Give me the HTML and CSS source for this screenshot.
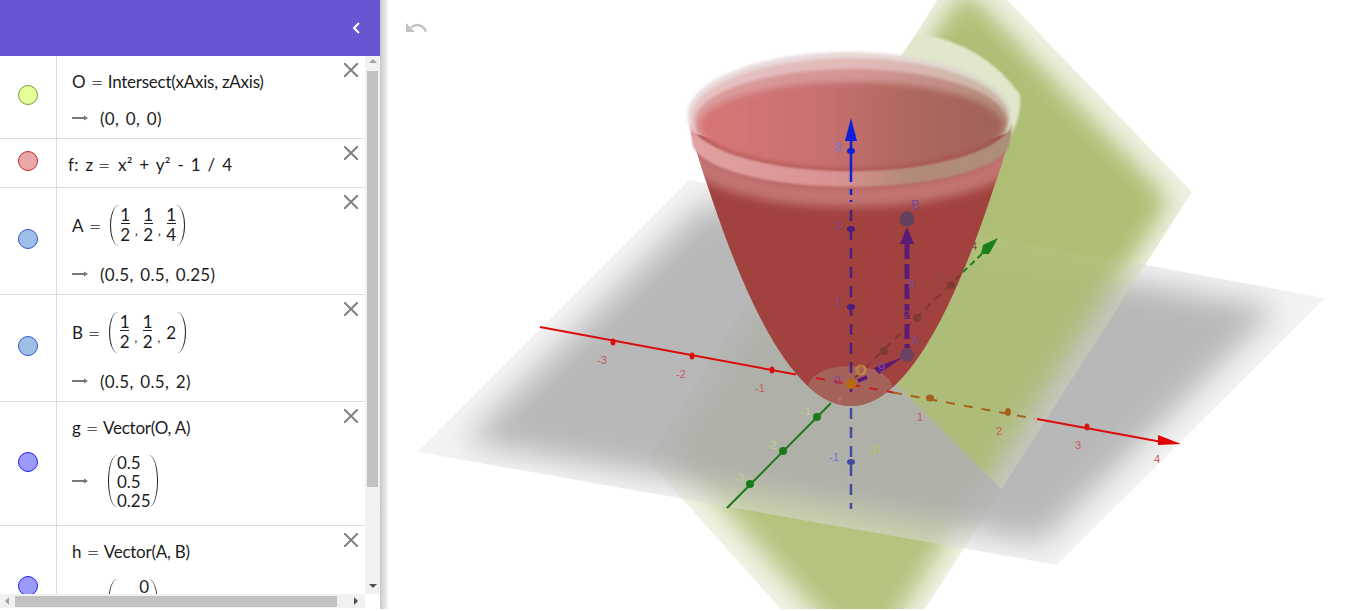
FILE: index.html
```html
<!DOCTYPE html>
<html lang="en">
<head>
<meta charset="utf-8">
<title>GeoGebra 3D</title>
<link rel="stylesheet" href="styles.css">
</head>
<body>
<div class="app">
  <aside class="panel">
    <header class="panel-head">
      <svg class="chevron" width="10" height="14" viewBox="0 0 10 14"><path d="M8 2 3 7l5 5" fill="none" stroke="#fff" stroke-width="2"/></svg>
    </header>
    <div class="panel-body">
      <div class="list">
        <div class="row row-point">
          <div class="marble-cell"><span class="marble marble-lime"></span></div>
          <div class="content">
            <div class="input"><span>O</span><span class="eq">=</span><span class="tight">Intersect(xAxis, zAxis)</span></div>
            <div class="output"><svg class="arrow" width="16" height="6" viewBox="0 0 16 6"><path d="M0 3h13" stroke="#777" stroke-width="2"/><path d="M12 .5 16 3l-4 2.500z" fill="#777"/></svg><span class="value">(0, 0, 0)</span></div>
          </div>
          <svg class="close" width="14" height="14" viewBox="0 0 14 14"><path d="M0 0 14 14M14 0 0 14" stroke="#808080" stroke-width="2"/></svg>
        </div>
        <div class="row row-surface">
          <div class="marble-cell"><span class="marble marble-red"></span></div>
          <div class="content content-surface">
            <div class="input value"><span>f: z</span><span class="eq">=</span><span class="terms">x² + y² - 1 / 4</span></div>
          </div>
          <svg class="close" width="14" height="14" viewBox="0 0 14 14"><path d="M0 0 14 14M14 0 0 14" stroke="#808080" stroke-width="2"/></svg>
        </div>
        <div class="row row-frac">
          <div class="marble-cell"><span class="marble marble-blue"></span></div>
          <div class="content content-frac">
            <div class="input"><span>A</span><span class="eq">=</span>
              <span class="paren paren-l"></span>
              <span class="frac"><span>1</span><span class="den">2</span></span><span class="comma">,</span>
              <span class="frac"><span>1</span><span class="den">2</span></span><span class="comma">,</span>
              <span class="frac"><span>1</span><span class="den">4</span></span>
              <span class="paren paren-r"></span>
            </div>
            <div class="output"><svg class="arrow" width="16" height="6" viewBox="0 0 16 6"><path d="M0 3h13" stroke="#777" stroke-width="2"/><path d="M12 .5 16 3l-4 2.500z" fill="#777"/></svg><span class="value">(0.5, 0.5, 0.25)</span></div>
          </div>
          <svg class="close" width="14" height="14" viewBox="0 0 14 14"><path d="M0 0 14 14M14 0 0 14" stroke="#808080" stroke-width="2"/></svg>
        </div>
        <div class="row row-frac">
          <div class="marble-cell"><span class="marble marble-blue"></span></div>
          <div class="content content-frac">
            <div class="input"><span>B</span><span class="eq">=</span>
              <span class="paren paren-l"></span>
              <span class="frac"><span>1</span><span class="den">2</span></span><span class="comma">,</span>
              <span class="frac"><span>1</span><span class="den">2</span></span><span class="comma">,</span>
              <span class="whole">2</span>
              <span class="paren paren-r"></span>
            </div>
            <div class="output"><svg class="arrow" width="16" height="6" viewBox="0 0 16 6"><path d="M0 3h13" stroke="#777" stroke-width="2"/><path d="M12 .5 16 3l-4 2.500z" fill="#777"/></svg><span class="value">(0.5, 0.5, 2)</span></div>
          </div>
          <svg class="close" width="14" height="14" viewBox="0 0 14 14"><path d="M0 0 14 14M14 0 0 14" stroke="#808080" stroke-width="2"/></svg>
        </div>
        <div class="row row-matrix">
          <div class="marble-cell"><span class="marble marble-violet"></span></div>
          <div class="content content-matrix">
            <div class="input"><span>g</span><span class="eq">=</span><span class="tight">Vector(O, A)</span></div>
            <div class="output output-matrix"><svg class="arrow" width="16" height="6" viewBox="0 0 16 6"><path d="M0 3h13" stroke="#777" stroke-width="2"/><path d="M12 .5 16 3l-4 2.500z" fill="#777"/></svg>
              <span class="paren paren-tall paren-l"></span>
              <span class="matrix"><span>0.5</span><span>0.5</span><span>0.25</span></span>
              <span class="paren paren-tall paren-r"></span>
            </div>
          </div>
          <svg class="close" width="14" height="14" viewBox="0 0 14 14"><path d="M0 0 14 14M14 0 0 14" stroke="#808080" stroke-width="2"/></svg>
        </div>
        <div class="row row-matrix">
          <div class="marble-cell"><span class="marble marble-violet"></span></div>
          <div class="content content-matrix">
            <div class="input"><span>h</span><span class="eq">=</span><span class="tight">Vector(A, B)</span></div>
            <div class="output output-matrix"><svg class="arrow" width="16" height="6" viewBox="0 0 16 6"><path d="M0 3h13" stroke="#777" stroke-width="2"/><path d="M12 .5 16 3l-4 2.500z" fill="#777"/></svg>
              <span class="paren paren-tall paren-l"></span>
              <span class="matrix matrix-right"><span>0</span><span>0</span><span>1.75</span></span>
              <span class="paren paren-tall paren-r"></span>
            </div>
          </div>
          <svg class="close" width="14" height="14" viewBox="0 0 14 14"><path d="M0 0 14 14M14 0 0 14" stroke="#808080" stroke-width="2"/></svg>
        </div>
      </div>
      <div class="vscroll">
        <span class="tri tri-up"></span>
        <span class="vthumb"></span>
        <span class="tri tri-down"></span>
      </div>
      <div class="hscroll">
        <span class="tri tri-left"></span>
        <span class="hthumb"></span>
        <span class="tri tri-right"></span>
      </div>
    </div>
  </aside>
  <div class="splitter"></div>
  <main class="view">
    <svg class="scene" width="978" height="609" viewBox="388 0 978 609">
      <defs>
        <filter id="blur-plane" filterUnits="userSpaceOnUse" x="300" y="-200" width="1150" height="1000"><feGaussianBlur stdDeviation="15"/></filter>
        <filter id="blur-green" filterUnits="userSpaceOnUse" x="300" y="-200" width="1150" height="1000"><feGaussianBlur stdDeviation="12"/></filter>
        <filter id="blur-s" filterUnits="userSpaceOnUse" x="600" y="0" width="500" height="300"><feGaussianBlur stdDeviation="1.500"/></filter>
        <filter id="blur-m" filterUnits="userSpaceOnUse" x="600" y="0" width="500" height="300"><feGaussianBlur stdDeviation="5"/></filter>
        <filter id="blur-t" filterUnits="userSpaceOnUse" x="600" y="0" width="500" height="300"><feGaussianBlur stdDeviation=".8"/></filter>
        <filter id="blur-i" filterUnits="userSpaceOnUse" x="600" y="0" width="500" height="300"><feGaussianBlur stdDeviation="3"/></filter>
        <clipPath id="clip-green"><polygon points="965,-44 1192,192 865,703 647,460"/></clipPath>
        <clipPath id="clip-gray"><polygon points="689,180 1325,298 1057,565 417,452"/></clipPath>
        <clipPath id="clip-front"><polygon points="760,248 760,-100 1300,-100 1300,788"/></clipPath>
        <clipPath id="clip-body"><path d="M689,126 Q851,686 1013,126Z"/></clipPath>
        <linearGradient id="grad-interior" gradientUnits="userSpaceOnUse" x1="698" y1="0" x2="1004" y2="0">
          <stop offset="0" stop-color="#d87676"/><stop offset=".4" stop-color="#c87072"/><stop offset=".7" stop-color="#ae675d"/><stop offset="1" stop-color="#a0625a"/>
        </linearGradient>
        <linearGradient id="grad-band" gradientUnits="userSpaceOnUse" x1="690" y1="0" x2="1010" y2="0">
          <stop offset="0" stop-color="#e2a2a2"/><stop offset=".45" stop-color="#da9292"/><stop offset=".68" stop-color="#b48a78"/><stop offset="1" stop-color="#ad8f7a"/>
        </linearGradient>
        <linearGradient id="grad-rim1" gradientUnits="userSpaceOnUse" x1="690" y1="0" x2="1010" y2="0">
          <stop offset="0" stop-color="#e8dede"/><stop offset=".55" stop-color="#e8d8d8"/><stop offset="1" stop-color="#d8dac8"/>
        </linearGradient>
        <linearGradient id="grad-rim2" gradientUnits="userSpaceOnUse" x1="690" y1="0" x2="1010" y2="0">
          <stop offset="0" stop-color="#e6c2c2"/><stop offset=".55" stop-color="#e2b8b8"/><stop offset="1" stop-color="#c8b6a4"/>
        </linearGradient>
        <linearGradient id="grad-rim3" gradientUnits="userSpaceOnUse" x1="690" y1="0" x2="1010" y2="0">
          <stop offset="0" stop-color="#dc9c9c"/><stop offset=".55" stop-color="#d49494"/><stop offset="1" stop-color="#b08a78"/>
        </linearGradient>
      </defs>

      <g clip-path="url(#clip-green)">
        <polygon points="965,-44 1192,192 865,703 647,460" fill="#e6ebd4" fill-opacity=".6"/>
        <polygon points="965,-6 1165,201 866,668 672,452" fill="#aabb6e" fill-opacity=".85" filter="url(#blur-green)"/>
      </g>
      <g clip-path="url(#clip-gray)">
        <polygon points="689,180 1325,298 1057,565 417,452" fill="#e4e4e4" fill-opacity=".45"/>
        <polygon points="705,202 1277,308 1041,543 465,442" fill="#a9a9a9" fill-opacity=".79" filter="url(#blur-plane)"/>
      </g>
      <g clip-path="url(#clip-front)">
        <g clip-path="url(#clip-green)">
          <polygon points="965,-44 1192,192 865,703 647,460" fill="#e6ebd4" fill-opacity=".3"/>
          <polygon points="965,-6 1165,201 866,668 672,452" fill="#aabb6e" fill-opacity=".85" filter="url(#blur-green)"/>
        </g>
      </g>

      <path class="rim-green" d="M917,33Q985,44 1020,95Q1022,118 1009,138L990,100 898,60Z" filter="url(#blur-t)"/>
      <ellipse cx="849" cy="115" rx="162" ry="63" fill="url(#grad-rim1)" filter="url(#blur-s)"/>
      <ellipse cx="850" cy="118" rx="159" ry="60" fill="url(#grad-rim2)" filter="url(#blur-s)"/>
      <ellipse cx="851" cy="122" rx="156" ry="53" fill="url(#grad-rim3)" filter="url(#blur-s)"/>

      <path d="M691,132 Q851,680 1011,132 Q851,190 691,132Z" fill="#a1423f"/>
      <g clip-path="url(#clip-body)">
        <path d="M688,146A163,50 0 0 0 1014,146" fill="none" stroke="#c27472" stroke-width="22" filter="url(#blur-m)"/>
      </g>
      <ellipse cx="851" cy="126" rx="152" ry="44" fill="url(#grad-interior)" filter="url(#blur-i)"/>
      <path d="M689,118A162,53 0 0 0 1013,118L1010,141A159,46 0 0 1 692,141Z" fill="url(#grad-band)" filter="url(#blur-t)"/>
      <ellipse cx="850" cy="387" rx="42" ry="21" fill="#a5625a" clip-path="url(#clip-body)"/>

      <path class="axis-red" d="M540,327 796,374.500"/>
      <path class="axis-red-dash" d="M816,378 893,392.500"/>
      <path class="axis-brown" d="M893,392.500 1035,418.800"/>
      <path class="axis-red" d="M1037,419 1162,442"/>
      <polygon points="1181,444 1158,435 1158,445" fill="#e00000"/>
      <g fill="#d81010">
        <ellipse cx="613" cy="342" rx="2.500" ry="3.500"/><ellipse cx="692" cy="356" rx="2.500" ry="3.500"/><ellipse cx="772" cy="370" rx="2.500" ry="3.500"/>
        <ellipse cx="1087" cy="427" rx="2.500" ry="3.500"/>
      </g>
      <g fill="#a5601c"><ellipse cx="930" cy="398" rx="4" ry="3.500"/><ellipse cx="1008" cy="412" rx="3" ry="4"/></g>

      <path class="axis-green" d="M727,508 831,403"/>
      <path class="axis-brown-thin" d="M855,378 960,275"/>
      <path class="axis-green-dash" d="M963,272 984,252"/>
      <polygon points="998,238 983,245 981,254 989,254" fill="#188018"/>
      <g fill="#1a7a1a"><circle cx="750" cy="484" r="4"/><circle cx="783" cy="451" r="4"/><circle cx="817" cy="417" r="4"/></g>
      <g fill="#7d3a30"><circle cx="884" cy="351" r="4"/><circle cx="917" cy="318" r="4"/><circle cx="951" cy="285" r="4"/></g>

      <path class="axis-blue-top" d="M851,138V182"/>
      <path class="axis-blue-top axis-blue-dash" d="M851,189V202"/>
      <polygon points="851,118 845,141 857,141" fill="#1020d8"/>
      <path class="axis-purple" d="M851,210V398"/>
      <path class="axis-slate" d="M851,408V509"/>
      <g fill="#4a1f80"><ellipse cx="851" cy="229" rx="4" ry="3"/><ellipse cx="851" cy="307" rx="4" ry="3"/></g>
      <ellipse cx="851" cy="151" rx="4" ry="3" fill="#1020d8"/>
      <ellipse cx="851" cy="462" rx="4" ry="3" fill="#454aa0"/>

      <path class="vector-h" d="M907,244V348"/>
      <polygon points="907,227 900,244 914,244" fill="#5a1a78"/>
      <path class="vector-g" d="M858,381 867,377"/>
      <polygon points="903,357 874,368 879,374" fill="#5a1a78"/>
      <circle cx="907" cy="355" r="7" fill="#6b4263"/>
      <circle cx="907" cy="219" r="7.500" fill="#64405f"/>
      <circle cx="851" cy="384" r="5" fill="#b8680f"/>
      <circle cx="861" cy="370" r="5" fill="none" stroke="#c88a40" stroke-width="1.200"/>

      <g class="labels">
        <text class="lbl-red" x="597" y="364">-3</text><text class="lbl-red" x="676" y="378">-2</text><text class="lbl-red" x="755" y="392">-1</text>
        <text class="lbl-red" x="917" y="421">1</text><text class="lbl-red" x="996" y="435">2</text><text class="lbl-red" x="1075" y="449">3</text><text class="lbl-red" x="1154" y="463">4</text>
        <text class="lbl-lime" x="734" y="482">-3</text><text class="lbl-lime" x="767" y="449">-2</text><text class="lbl-lime" x="801" y="415">-1</text>
        <text class="lbl-dark" x="871" y="348">1</text><text class="lbl-dark" x="904" y="318">2</text><text class="lbl-dark" x="938" y="282">3</text><text class="lbl-dark" x="971" y="250">4</text>
        <text class="lbl-blue" x="835" y="151">3</text><text class="lbl-purple" x="835" y="230">2</text><text class="lbl-purple" x="835" y="306">1</text><text class="lbl-blue" x="829" y="461">-1</text>
        <text class="lbl-purple" x="834" y="384">0</text><text class="lbl-purple lbl-big" x="911" y="209">B</text><text class="lbl-purple lbl-big" x="911" y="345">A</text>
        <text class="lbl-purple lbl-big" x="908" y="288">h</text><text class="lbl-purple lbl-big" x="878" y="369">g</text><text class="lbl-orange" x="857" y="374">O</text>
        <text class="lbl-pink" x="838" y="405">f</text><text class="lbl-p" x="872" y="453">p</text>
      </g>

      <g class="undo">
        <path d="M411,27.500C417,23 423,25 426,31.500" fill="none" stroke="#c2c2c2" stroke-width="2.500"/>
        <polygon points="406,23 406,32 415,32" fill="#c2c2c2"/>
      </g>
    </svg>
  </main>
</div>
</body>
</html>
```
FILE: styles.css
```css
* { box-sizing: border-box; }
html, body { margin: 0; height: 100%; background: #fff; overflow: hidden; }
body { font-family: Lato, "Open Sans", sans-serif; color: #1c1c1c; }

.app { display: flex; height: 609px; }

.panel { width: 380px; flex: none; display: flex; flex-direction: column; }
.panel-head { height: 56px; flex: none; background: #6557d2; display: flex; justify-content: flex-end; align-items: center; padding: 0 19px 0 0; }
.chevron { display: block; }

.panel-body { flex: 1; min-height: 0; display: grid; grid-template-columns: 365px 15px; grid-template-rows: 538px 14px; }

.list { overflow: hidden; background: #fff; font-size: 17px; }
.row { position: relative; display: flex; border-bottom: 1px solid #dcdcdc; overflow: hidden; }
.row-point { height: 83px; }
.row-surface { height: 49px; }
.row-frac { height: 107px; }
.row-matrix { height: 124px; }

.marble-cell { width: 57px; flex: none; border-right: 1px solid #dcdcdc; display: flex; align-items: center; justify-content: center; padding: 0 1px 4px 0; }
.marble { width: 20px; height: 20px; border-radius: 50%; border: 1px solid #000; display: block; }
.marble-lime { background: #e5ff99; border-color: #7c9c3c; }
.marble-red { background: #e8a8a8; border-color: #c8282c; }
.marble-blue { background: #9dbfe8; border-color: #3557cf; }
.marble-violet { background: #9b9bff; border-color: #2020ee; }

.content { flex: 1; padding: 7px 0 0 15px; min-width: 0; }
.content-surface { padding: 7px 0 0 11px; }
.content-frac { padding-top: 15px; }
.content-matrix { padding-top: 7px; }

.input { height: 36px; display: flex; align-items: center; white-space: pre; }
.content-frac .input { height: 44px; white-space: normal; }
.eq { color: #555; font-size: 21px; font-weight: 300; line-height: 1; margin: 0 5px; transform: scaleX(1.05); }
.tight { letter-spacing: -.25px; }
.terms { word-spacing: 2px; margin-left: 2px; }
.output { height: 36px; margin-top: 1px; display: flex; align-items: center; white-space: pre; }
.content-frac .output { margin-top: 9px; }
.output-matrix { height: 60px; margin-top: 6px; }
.arrow { flex: none; display: block; margin-right: 12px; }
.value { word-spacing: 2px; letter-spacing: .3px; }

.frac { display: inline-flex; flex-direction: column; align-items: center; width: 9px; font-size: 17px; line-height: 17px; flex: none; }
.den { border-top: 1px solid #222; align-self: stretch; line-height: 19px; display: flex; justify-content: center; padding-top: 1px; }
.comma { font-size: 14px; align-self: center; margin: 8px 9px 0 5px; color: #333; width: 0; }
.whole { font-size: 17px; margin: 0 1px 0 0; }

.paren { display: block; flex: none; width: 9px; height: 41px; border: 0 solid #222; }
.paren-l { border-left-width: 1.5px; border-radius: 100% 0 0 100% / 50% 0 0 50%; margin: 0 2px 0 4px; }
.paren-r { border-right-width: 1.5px; border-radius: 0 100% 100% 0 / 0 50% 50% 0; margin: 0; }
.paren-tall { height: 52px; width: 9px; }
.output-matrix .paren-l { margin: 0 0 0 8px; }
.output-matrix .paren-r { margin: 0; }

.matrix { display: flex; flex-direction: column; font-size: 17px; line-height: 19px; width: 32px; flex: none; }
.matrix-right { align-items: flex-end; }

.close { position: absolute; right: 7px; top: 7px; display: block; }

.vscroll { background: #f1f1f1; display: flex; flex-direction: column; align-items: center; padding: 0 2px; grid-row: 1; grid-column: 2; }
.vthumb { width: 11px; height: 416px; background: #c1c1c1; flex: none; margin: 6px 0 0; }
.hscroll { background: #f1f1f1; display: flex; align-items: center; grid-row: 2; grid-column: 1; padding: 0 3px 0 5px; }
.hthumb { width: 322px; height: 11px; background: #c1c1c1; margin: 0 0 0 6px; flex: none; }
.tri { display: block; width: 0; height: 0; border-style: solid; flex: none; }
.tri-up { border-width: 0 4.500px 4px; border-color: transparent transparent #a3a3a3; margin-top: 3px; margin-bottom: 2px; }
.tri-down { border-width: 4px 4.500px 0; border-color: #505050 transparent transparent; margin-top: 97px; }
.tri-left { border-width: 4.500px 4px 4.500px 0; border-color: transparent #a3a3a3 transparent transparent; }
.tri-right { border-width: 4.500px 0 4.500px 4px; border-color: transparent transparent transparent #505050; margin-left: 17px; }

.splitter { width: 8px; flex: none; background: linear-gradient(to right, #c8c8c8, #f6f6f6); }

.view { flex: 1; min-width: 0; background: #fff; overflow: hidden; }
.scene { display: block; }

.rim-green { fill: #e1e7cb; }
.axis-red { fill: none; stroke: #dc0c0c; stroke-width: 2; }
.axis-red-dash { fill: none; stroke: #c82020; stroke-width: 2; stroke-dasharray: 9 9; }
.axis-brown { fill: none; stroke: #a5601c; stroke-width: 2; stroke-dasharray: 9 9; }
.axis-green { fill: none; stroke: #1a7a1a; stroke-width: 2; }
.axis-brown-thin { fill: none; stroke: #7d3a30; stroke-width: 2; stroke-dasharray: 8 6; }
.axis-green-dash { fill: none; stroke: #188018; stroke-width: 2; stroke-dasharray: 6 4; }
.axis-blue-top { fill: none; stroke: #1020d8; stroke-width: 2.500; }
.axis-blue-dash { stroke-dasharray: 6 5; }
.axis-purple { fill: none; stroke: #4a1f80; stroke-width: 2.500; stroke-dasharray: 11 8; }
.axis-slate { fill: none; stroke: #454aa0; stroke-width: 2.500; stroke-dasharray: 11 8; }
.vector-h { fill: none; stroke: #5a1a78; stroke-width: 5; stroke-dasharray: 15 5; }
.vector-g { fill: none; stroke: #5a1a78; stroke-width: 4; }

.labels text { font-family: "Liberation Sans", Arial, sans-serif; font-size: 11px; }
.lbl-red { fill: #c85a5a; }
.lbl-lime { fill: #bcd28c; }
.lbl-dark { fill: #8a4a44; }
.lbl-blue { fill: #6a72e8; }
.lbl-purple { fill: #7a4a9c; }
.labels .lbl-big { font-size: 13px; }
.lbl-orange { fill: #c88a40; }
.lbl-pink { fill: #d06a6a; }
.labels .lbl-p { fill: #aec46a; font-size: 15px; }
```
